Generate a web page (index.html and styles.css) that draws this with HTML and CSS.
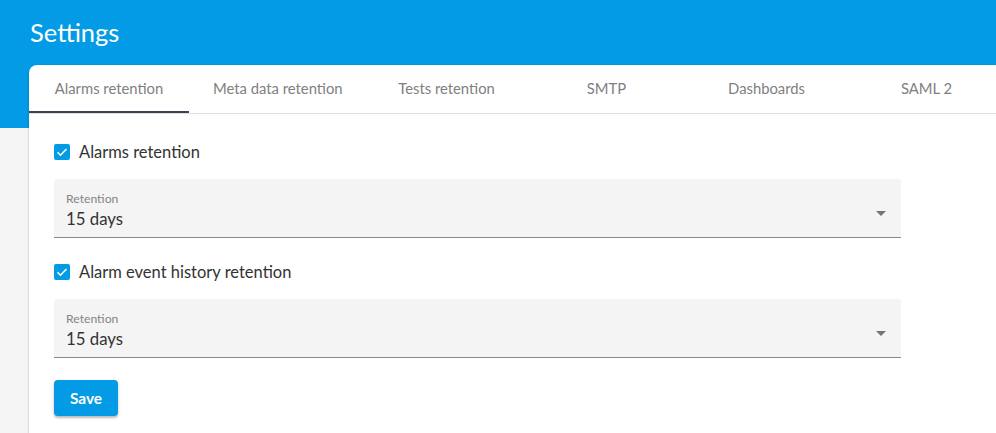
FILE: index.html
```html
<!DOCTYPE html>
<html lang="en">
<head>
    <meta charset="UTF-8">
    <meta name="viewport" content="width=device-width, initial-scale=1.0">
    <title>Settings</title>
    <link rel="stylesheet" href="styles.css">
</head>
<body>
    <div class="page-header">
        <h1>Settings</h1>
    </div>

    <div class="page-content">
        <div class="card">
            <div class="tabs">
                <div class="tab active">Alarms retention</div>
                <div class="tab">Meta data retention</div>
                <div class="tab">Tests retention</div>
                <div class="tab">SMTP</div>
                <div class="tab">Dashboards</div>
                <div class="tab">SAML 2</div>
            </div>

            <form class="tab-body">
                <label class="check-row">
                    <span class="checkbox">
                        <svg viewBox="0 0 16 16"><path d="M3.5 8.2l3 3 6-6.2" /></svg>
                    </span>
                    Alarms retention
                </label>

                <div class="select-field">
                    <span class="field-label">Retention</span>
                    <span class="field-value">15 days</span>
                    <span class="arrow"></span>
                </div>

                <label class="check-row">
                    <span class="checkbox">
                        <svg viewBox="0 0 16 16"><path d="M3.5 8.2l3 3 6-6.2" /></svg>
                    </span>
                    Alarm event history retention
                </label>

                <div class="select-field">
                    <span class="field-label">Retention</span>
                    <span class="field-value">15 days</span>
                    <span class="arrow"></span>
                </div>

                <button type="submit" class="save-btn">Save</button>
            </form>
        </div>
    </div>
</body>
</html>
```

FILE: styles.css
```css
body {
    margin: 0;
    padding: 0;
    background-color: #f5f5f5;
    font-family: Lato, "Open Sans", sans-serif;
    color: rgba(0, 0, 0, 0.87);
    overflow: hidden;
}

.page-header {
    height: 128px;
    background-color: #039be5;
    padding: 17px 30px 0;
    box-sizing: border-box;
}
.page-header h1 {
    margin: 0;
    font-size: 25.5px;
    line-height: 30px;
    font-weight: 400;
    color: #fff;
}

.page-content {
    margin-top: -63px;
    padding-left: 29px;
}
.card {
    background-color: #fff;
    border-radius: 8px 0 0 0;
    box-shadow: 0 1px 3px rgba(0, 0, 0, 0.2), 0 1px 1px rgba(0, 0, 0, 0.12);
    min-height: 380px;
    overflow: hidden;
}

/* tabs keep their width, the card clips whatever doesn't fit */
.tabs {
    display: flex;
    border-bottom: 1px solid #e0e0e0;
}
.tab {
    position: relative;
    flex-shrink: 0;
    min-width: 160px;
    height: 48px;
    padding: 0 24px 3px;
    box-sizing: border-box;
    display: flex;
    align-items: center;
    justify-content: center;
    font-size: 14.8px;
    color: #808080;
    white-space: nowrap;
}
.tab.active::after {
    content: "";
    position: absolute;
    left: 0;
    right: 0;
    bottom: 0;
    height: 2px;
    background-color: #3c4252;
}

.tab-body {
    padding: 26px 25px 12px;
}

.check-row {
    display: flex;
    align-items: center;
    height: 24px;
    margin-bottom: 15px;
    font-size: 16.5px;
    color: #333;
}
.checkbox {
    width: 16px;
    height: 16px;
    margin-right: 9px;
    border-radius: 2px;
    background-color: #039be5;
    display: flex;
}
.checkbox svg {
    width: 16px;
    height: 16px;
    fill: none;
    stroke: #fff;
    stroke-width: 1.6;
}

.select-field {
    position: relative;
    width: 847px;
    height: 59px;
    padding: 13px 12px 0;
    box-sizing: border-box;
    margin-bottom: 22px;
    background-color: #f4f4f4;
    border-radius: 4px 4px 0 0;
    border-bottom: 1px solid #8a8a8a;
    display: flex;
    flex-direction: column;
}
.field-label {
    font-size: 12.2px;
    line-height: 14px;
    color: #858585;
}
.field-value {
    margin-top: 3px;
    font-size: 16.8px;
    line-height: 20px;
    color: #333;
}
.arrow {
    position: absolute;
    right: 15px;
    top: 32px;
    width: 0;
    height: 0;
    border-left: 5px solid transparent;
    border-right: 5px solid transparent;
    border-top: 5px solid #757575;
}

.save-btn {
    width: 64px;
    height: 36px;
    border: none;
    border-radius: 4px;
    background-color: #039be5;
    color: #fff;
    font-family: inherit;
    font-size: 15.4px;
    font-weight: 700;
    box-shadow: 0 2px 2px rgba(0, 0, 0, 0.2), 0 1px 4px rgba(0, 0, 0, 0.12);
    cursor: pointer;
}
```
